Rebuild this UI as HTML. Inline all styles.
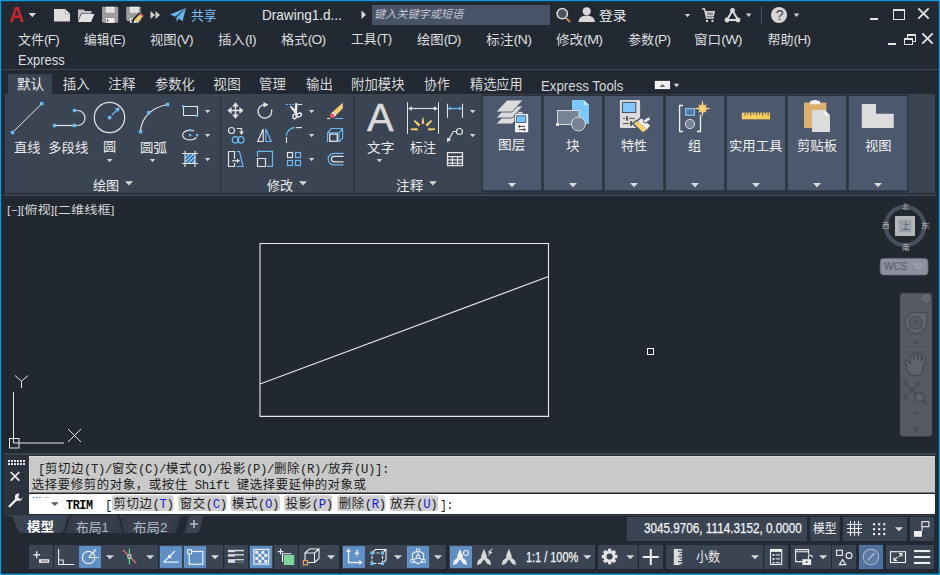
<!DOCTYPE html>
<html lang="zh-CN"><head><meta charset="utf-8"><title>AutoCAD</title>
<style>
html,body{margin:0;padding:0;background:#222933;}
body{width:940px;height:575px;position:relative;overflow:hidden;font-family:"Liberation Sans","Noto Sans CJK SC",sans-serif;}
svg{position:absolute;left:0;top:0;}
.t{position:absolute;white-space:nowrap;line-height:1.2;transform-origin:0 0;}
.m{font-family:"Liberation Mono","Noto Sans CJK SC",monospace;}
.l{font-size:13.5px;letter-spacing:-0.7px;}
.vb{font-size:10.5px;position:relative;top:-0.5px}
.c{font-family:"Noto Sans CJK SC",sans-serif;letter-spacing:0.6px;} .a{font-family:"Liberation Mono",monospace;font-size:12.3px;letter-spacing:-0.38px;}
</style></head>
<body>
<svg width="940" height="575" viewBox="0 0 940 575">
<rect x="0" y="0" width="940" height="575" fill="#222933" />
<rect x="4" y="196" width="935" height="257" fill="#212830" />
<path d="M28.549999999999997 13h7.5l-3.75 4.3z" fill="#dcdcdc"/>
<path d="M54 9h11l5 5v7.5h-16z" fill="#dcdcdc"  />
<path d="M65 9l5 5h-5z" fill="#f4f4f4"  />
<path d="M65.3 9.3v4.4h4.4" fill="none" stroke="#9a9a9a" stroke-width="0.8" />
<path d="M78 9.5h5.5l1.5 1.5h6.5v2.5h-10.5l-3 7.5z" fill="#c4c4c4"  />
<path d="M81.5 14h13l-3.5 8h-13z" fill="#e2e2e2"  />
<path d="M102 6.8h16.2v16h-14.7l-1.5 -1.5z" fill="#9c9c9c"  />
<rect x="105.8" y="6.8" width="8.7" height="5.8" fill="#f0f0f0" />
<rect x="106.6" y="7.6" width="7.1" height="4.2" fill="#e0e0e0" />
<rect x="105.8" y="18.2" width="8.7" height="4.6" fill="#f4f4f4" />
<rect x="106.9" y="19.3" width="1.3" height="2.5" fill="#555" />
<path d="M126.2 6.8h14.5v14.5h-13.0l-1.5 -1.5z" fill="#9c9c9c"  />
<rect x="130.0" y="6.8" width="8.7" height="5.8" fill="#f0f0f0" />
<rect x="130.8" y="7.6" width="7.1" height="4.2" fill="#e0e0e0" />
<rect x="130.0" y="18.2" width="8.7" height="4.6" fill="#f4f4f4" />
<rect x="131.1" y="19.3" width="1.3" height="2.5" fill="#555" />
<path d="M132 23.6l0.6 -4.6l6.6 -6.6l4 4l-6.6 6.6z" fill="#222933"  />
<path d="M134.6 19.4l5.2 -5.2l2.9 2.9l-5.2 5.2z" fill="#f4cc6a"  />
<path d="M139.8 14.2l1.2 -1.2l2.9 2.9l-1.2 1.2z" fill="#ee5560"  />
<path d="M134.6 19.4l2.9 2.9l-3.8 0.9z" fill="#f2f2f2"  />
<path d="M150.5 11l4.5 4l-4.5 4z" fill="#d0d0d0"  />
<path d="M155.5 11l4.5 4l-4.5 4z" fill="#d0d0d0"  />
<path d="M186 8l-16 6.5l5.5 2.2z" fill="#6ab6ee"  />
<path d="M186 8l-9.5 9.2l0 4.6l2.6 -3.2l3.4 2.6z" fill="#6ab6ee"  />
<path d="M186 8l-10.5 8.7l1 0.5z" fill="#222933"  />
<path d="M361.5 10.5l4.5 4.3l-4.5 4.3z" fill="#d8d8d8"  />
<rect x="372" y="5" width="178" height="20" fill="#495368" />
<circle cx="562.3" cy="13.6" r="5.2" fill="#4a5260" stroke="#dcdcdc" stroke-width="1.5" />
<line x1="565.5" y1="17.5" x2="570" y2="22" stroke="#c89060" stroke-width="1.8" />
<circle cx="586.7" cy="11.2" r="4" fill="#d8d8d8"  />
<path d="M578.4 22q0.3 -6.5 8.3 -6.5q8 0 8.3 6.5z" fill="#d8d8d8"  />
<path d="M684.75 14h5.5l-2.75 3.3z" fill="#d4d4d4"/>
<path d="M702 9h2.5l2 9h7.5" fill="none" stroke="#d8d8d8" stroke-width="1.3" />
<path d="M705 11h10l-1.2 5.5h-7.6z" fill="#d8d8d8"  />
<rect x="707" y="12.2" width="6" height="3" fill="#8a8e96" />
<rect x="706" y="20" width="2" height="2" fill="#d8d8d8" />
<rect x="711.5" y="20" width="2" height="2" fill="#d8d8d8" />
<path d="M732.5 10.5l-5.5 9.5h11z" fill="none" stroke="#dcdcdc" stroke-width="2" />
<circle cx="732.5" cy="10.5" r="2.4" fill="#dcdcdc"  />
<circle cx="727" cy="20" r="2.4" fill="#dcdcdc"  />
<circle cx="738" cy="20" r="2.4" fill="#dcdcdc"  />
<path d="M745.95 13.5h5.5l-2.75 3.5z" fill="#d0d0d0"/>
<rect x="761" y="6" width="1" height="18" fill="#46506a" />
<circle cx="779" cy="15" r="8" fill="#d6d6d6"  />
<path d="M793.75 13.5h5.5l-2.75 3.5z" fill="#d0d0d0"/>
<rect x="870" y="18" width="8" height="2" fill="#e4e4e4" />
<path d="M893 9h12v11h-12zM894 11v8h10v-8z" fill="#e4e4e4"  fill-rule="evenodd"/>
<path d="M918.3 8.3l10.4 10.4M928.7 8.3l-10.4 10.4" fill="none" stroke="#e4e4e4" stroke-width="1.8" />
<rect x="888" y="43" width="8" height="2" fill="#e4e4e4" />
<rect x="907" y="34" width="9" height="2" fill="#e4e4e4" />
<rect x="915" y="34" width="1" height="8" fill="#e4e4e4" />
<rect x="907" y="36" width="1" height="2" fill="#e4e4e4" />
<rect x="913" y="41" width="3" height="1" fill="#e4e4e4" />
<rect x="904" y="38" width="9" height="2" fill="#e4e4e4" />
<rect x="904" y="38" width="1" height="7" fill="#e4e4e4" />
<rect x="912" y="38" width="1" height="7" fill="#e4e4e4" />
<rect x="904" y="44" width="9" height="1" fill="#e4e4e4" />
<path d="M922.3 33.3l10.4 10.4M932.7 33.3l-10.4 10.4" fill="none" stroke="#e4e4e4" stroke-width="1.8" />
<rect x="1" y="69" width="938" height="1" fill="#39424f" />
<rect x="8" y="74" width="44" height="20" fill="#3b4453" />
<rect x="654.8" y="80.9" width="15.3" height="8.2" fill="#fafafa" />
<rect x="655.7" y="81.8" width="13.5" height="6.4" fill="#eeeeee" />
<path d="M659.8 87h5.4l-2.7 -3z" fill="#666"  />
<path d="M673.7 83.8h5.6l-2.8 3.4z" fill="#d8d8d8"/>
<rect x="5" y="94" width="930" height="99" fill="#3b4453" />
<rect x="4" y="194" width="932" height="2.2" fill="#39424f" />
<rect x="220" y="96" width="1" height="96" fill="#2a313c" />
<rect x="353.3" y="96" width="1" height="96" fill="#2a313c" />
<line x1="13.5" y1="131.5" x2="41" y2="104.5" stroke="#e4e4e4" stroke-width="1.0" />
<rect x="40" y="102" width="3.4" height="3.4" fill="#6cb8f0" />
<rect x="10.8" y="130.8" width="3.4" height="3.4" fill="#6cb8f0" />
<line x1="56" y1="125.5" x2="73" y2="125.5" stroke="#e4e4e4" stroke-width="1.2" />
<path d="M76.5 110.5h1a7.5 7.5 0 0 1 0 15h-1" fill="none" stroke="#e4e4e4" stroke-width="1.2" />
<rect x="52.8" y="123.8" width="3.4" height="3.4" fill="#6cb8f0" />
<rect x="72.8" y="123.8" width="3.4" height="3.4" fill="#6cb8f0" />
<rect x="72.8" y="108.8" width="3.4" height="3.4" fill="#6cb8f0" />
<circle cx="109.5" cy="117.5" r="15.2" fill="none" stroke="#e4e4e4" stroke-width="1.2" />
<rect x="107.9" y="115.9" width="3.4" height="3.4" fill="#6cb8f0" />
<line x1="112" y1="115" x2="118" y2="109" stroke="#6cb8f0" stroke-width="1.3" />
<path d="M119.8 107.2l-5 1.3l3.7 3.7z" fill="#6cb8f0"  />
<path d="M140.5 130.5Q143 110 167 104.5" fill="none" stroke="#e4e4e4" stroke-width="1.2" />
<rect x="165.9" y="102.8" width="3.4" height="3.4" fill="#6cb8f0" />
<rect x="147" y="111" width="3.4" height="3.4" fill="#6cb8f0" />
<rect x="138.9" y="129.9" width="3.4" height="3.4" fill="#6cb8f0" />
<path d="M106.85 159h5.5l-2.75 3.2z" fill="#d4d4d4"/>
<path d="M149.85 159h5.5l-2.75 3.2z" fill="#d4d4d4"/>
<path d="M183.5 106.5h14v9h-14z" fill="none" stroke="#e4e4e4" stroke-width="1.1" />
<rect x="182" y="105" width="2.2" height="2.2" fill="#6cb8f0" />
<rect x="196" y="114.6" width="2.2" height="2.2" fill="#6cb8f0" />
<path d="M204.85 110h5.5l-2.75 3.2z" fill="#d4d4d4"/>
<path d="M196.5 137.5A7.5 4.8 0 1 1 194 131" fill="none" stroke="#e4e4e4" stroke-width="1.2" />
<rect x="189" y="129" width="2.3" height="2.3" fill="#6cb8f0" />
<rect x="189" y="134" width="2.3" height="2.3" fill="#6cb8f0" />
<rect x="196" y="134" width="2.3" height="2.3" fill="#6cb8f0" />
<path d="M204.85 134h5.5l-2.75 3.2z" fill="#d4d4d4"/>
<rect x="185" y="153.5" width="10" height="10" fill="#33689c" />
<g stroke="#8fd0ff" stroke-width="1.1"><path d="M185.5 158l4.5 -4.5M185.5 162l8.5 -8.5M188 163.5l7 -7M192 163.5l3 -3"/></g>
<path d="M182 153.5h16M182 163.5h16M185 150.7v16.3M195 150.7v16.3" fill="none" stroke="#e4e4e4" stroke-width="1.1" />
<path d="M204.85 158h5.5l-2.75 3.2z" fill="#d4d4d4"/>
<path d="M125.0 181.3h8l-4.0 4.2z" fill="#d4d4d4"/>
<path d="M235.5 104v13M229 110.5h13" fill="none" stroke="#e4e4e4" stroke-width="1.5" />
<path d="M235.5 102.3l-3.4 4.2h6.8zM235.5 118.7l-3.4 -4.2h6.8zM227.4 110.5l4.2 -3.4v6.8zM243.6 110.5l-4.2 -3.4v6.8z" fill="#e4e4e4"  />
<path d="M271.5 109.5A6.8 6.8 0 1 1 264 104.6" fill="none" stroke="#e4e4e4" stroke-width="1.3" />
<path d="M263.5 102l5 2.8l-5 2.8z" fill="#e4e4e4"  />
<g stroke="#6cb8f0" stroke-width="1.1"><path d="M285.9 104.5h2.4M289.2 104.5h2.2M292.2 104.5h1.8"/></g>
<line x1="297.8" y1="104.5" x2="302.2" y2="104.5" stroke="#e4e4e4" stroke-width="1.1" />
<path d="M295.3 103l2.2 0.3l-0.5 9.4l-2.6 0z" fill="#f4f4f4"  />
<path d="M289.6 106.4l1.8 -0.5l5.6 5.8l-1.9 1.8z" fill="#f4f4f4"  />
<ellipse cx="294.6" cy="116.5" rx="1.7" ry="2.4" fill="none" stroke="#f4f4f4" stroke-width="1.3"/>
<ellipse cx="299.1" cy="115" rx="2.5" ry="1.7" fill="none" stroke="#f4f4f4" stroke-width="1.3" transform="rotate(-28 299.1 115)"/>
<path d="M295.6 112.5l2 1.5" fill="none" stroke="#f4f4f4" stroke-width="1.4" />
<path d="M308.85 110h5.5l-2.75 3.2z" fill="#d4d4d4"/>
<path d="M342.8 102.8v5.7l-6.3 6.2l-3.2 -3.4z" fill="#f6cd6e"  />
<path d="M333.3 111.3l3.2 3.4l-2.2 2.2l-3.2 -3.4z" fill="#f6f6f6"  />
<circle cx="332.2" cy="115.8" r="2.4" fill="#ee5560"  />
<line x1="327" y1="118.5" x2="330" y2="118.5" stroke="#e4e4e4" stroke-width="1.1" />
<line x1="335" y1="118.5" x2="343.2" y2="118.5" stroke="#6cb8f0" stroke-width="1.1" />
<circle cx="231.5" cy="130.5" r="3" fill="none" stroke="#e4e4e4" stroke-width="1.2" />
<path d="M236.5 128.5h5v4" fill="none" stroke="#e4e4e4" stroke-width="1.2" />
<path d="M241.5 135l-2.4 -3.4h4.8z" fill="#e4e4e4"  />
<circle cx="235.5" cy="139.8" r="3.2" fill="none" stroke="#6cb8f0" stroke-width="1.3" />
<circle cx="240.8" cy="139.8" r="3.2" fill="none" stroke="#6cb8f0" stroke-width="1.3" />
<path d="M263.2 129v12.5h-5.4z" fill="none" stroke="#e4e4e4" stroke-width="1.2" />
<path d="M265.8 129v12.5h5.4z" fill="none" stroke="#6cb8f0" stroke-width="1.2" />
<path d="M286.4 135.6A8.5 8.5 0 0 1 294.9 127.6" fill="none" stroke="#6cb8f0" stroke-width="1.3" />
<line x1="296.1" y1="127.6" x2="302" y2="127.6" stroke="#e4e4e4" stroke-width="1.2" />
<line x1="286.5" y1="137" x2="286.5" y2="143" stroke="#e4e4e4" stroke-width="1.1" />
<path d="M308.85 134h5.5l-2.75 3.2z" fill="#d4d4d4"/>
<rect x="329.7" y="134.1" width="7.6" height="7.2" fill="none" stroke="#e4e4e4" stroke-width="1.3"/>
<path d="M327.5 141.9V132.8L331.3 128.5H342.6L338.9 132.8H327.5M342.6 128.5V138L338.9 141.9V132.8" fill="none" stroke="#6cb8f0" stroke-width="1.15" stroke-linejoin="round"/>
<path d="M228.5 151.5h6v7.5M228.5 151.5v15h6v-3.5" fill="none" stroke="#e4e4e4" stroke-width="1.2" />
<path d="M236.5 151.5h3l3.5 15h-6.5" fill="none" stroke="#6cb8f0" stroke-width="1.2" />
<line x1="232" y1="160.8" x2="238" y2="160.8" stroke="#e4e4e4" stroke-width="1.2" />
<path d="M240 160.8l-3 -2.2v4.4z" fill="#e4e4e4"  />
<path d="M257.5 151.3h15v15h-5.5M257.5 151.3v5.5" fill="none" stroke="#6cb8f0" stroke-width="1.2" />
<path d="M257.5 158.5h8v8h-8z" fill="none" stroke="#e4e4e4" stroke-width="1.2" />
<rect x="287.5" y="152.5" width="5" height="5" fill="none" stroke="#e4e4e4" stroke-width="1.2"/>
<rect x="295.5" y="152.5" width="5" height="5" fill="none" stroke="#6cb8f0" stroke-width="1.2"/>
<rect x="287.5" y="160.5" width="5" height="5" fill="none" stroke="#6cb8f0" stroke-width="1.2"/>
<rect x="295.5" y="160.5" width="5" height="5" fill="none" stroke="#6cb8f0" stroke-width="1.2"/>
<path d="M308.85 158h5.5l-2.75 3.2z" fill="#d4d4d4"/>
<path d="M343.5 153.3h-9.5a5.8 5.8 0 0 0 0 11.6h9.5" fill="none" stroke="#6cb8f0" stroke-width="1.2" />
<path d="M343.5 156.3h-9.3a2.8 2.8 0 0 0 0 5.6h9.3" fill="none" stroke="#e4e4e4" stroke-width="1.2" />
<path d="M299.0 181.3h8l-4.0 4.2z" fill="#d4d4d4"/>
<path d="M376.65 159h5.5l-2.75 3.2z" fill="#d4d4d4"/>
<line x1="407.5" y1="102.2" x2="407.5" y2="134" stroke="#e4e4e4" stroke-width="1" />
<line x1="438.5" y1="102.2" x2="438.5" y2="134" stroke="#e4e4e4" stroke-width="1" />
<line x1="410" y1="108.5" x2="436" y2="108.5" stroke="#e4e4e4" stroke-width="1.1" />
<path d="M408 108.5l4 -2.2v4.4zM438 108.5l-4 -2.2v4.4z" fill="#e4e4e4"  />
<g fill="#fbd36c"><path d="M422.4 117.4h1l0.8 6.4h-2.6z"/><path d="M413.6 121l1.2 -1l5.4 4.6l-1.6 1.8z"/><path d="M432.2 121l-1.2 -1l-5.4 4.6l1.6 1.8z"/><path d="M410.8 128.6l6.8 -0.4v2.4l-6.8 -0.6z"/><path d="M435 128.6l-6.8 -0.4v2.4l6.8 -0.6z"/></g>
<line x1="447.5" y1="103.7" x2="447.5" y2="117.8" stroke="#e4e4e4" stroke-width="1.1" />
<line x1="462.5" y1="103.7" x2="462.5" y2="117.8" stroke="#e4e4e4" stroke-width="1.1" />
<line x1="448" y1="108.5" x2="462" y2="108.5" stroke="#6cb8f0" stroke-width="1.3" />
<path d="M448 108.5l3 -1.8v3.6zM462 108.5l-3 -1.8v3.6z" fill="#6cb8f0"  />
<path d="M469.85 110h5.5l-2.75 3.2z" fill="#d4d4d4"/>
<circle cx="459.5" cy="131.5" r="3" fill="none" stroke="#e4e4e4" stroke-width="1.2" />
<path d="M456.3 131.5h-3l-4.6 8" fill="none" stroke="#e4e4e4" stroke-width="1.2" />
<path d="M446.8 142.4l0.6 -5l3.8 2.2z" fill="#e4e4e4"  />
<path d="M469.85 134h5.5l-2.75 3.2z" fill="#d4d4d4"/>
<path d="M447.5 152.7h15v13h-15z" fill="none" stroke="#e4e4e4" stroke-width="1.3" />
<path d="M447.5 156.6h15M447.5 159.9h15M447.5 163.1h15M452.4 156.6v9M457.6 156.6v9" fill="none" stroke="#e4e4e4" stroke-width="1.1" />
<path d="M428.9 181.3h8l-4.0 4.2z" fill="#d4d4d4"/>
<rect x="481.5" y="94.8" width="61.0" height="97.6" fill="#28303b" />
<rect x="482.7" y="96" width="58.6" height="94.3" fill="#4c586d" />
<path d="M508.0 183h8l-4.0 4.2z" fill="#dcdcdc"/>
<rect x="542.5" y="94.8" width="61.0" height="97.6" fill="#28303b" />
<rect x="543.7" y="96" width="58.6" height="94.3" fill="#4c586d" />
<path d="M569.0 183h8l-4.0 4.2z" fill="#dcdcdc"/>
<rect x="603.5" y="94.8" width="61.0" height="97.6" fill="#28303b" />
<rect x="604.7" y="96" width="58.6" height="94.3" fill="#4c586d" />
<path d="M630.0 183h8l-4.0 4.2z" fill="#dcdcdc"/>
<rect x="664.5" y="94.8" width="61.0" height="97.6" fill="#28303b" />
<rect x="665.7" y="96" width="58.6" height="94.3" fill="#4c586d" />
<path d="M691.0 183h8l-4.0 4.2z" fill="#dcdcdc"/>
<rect x="725.5" y="94.8" width="61.0" height="97.6" fill="#28303b" />
<rect x="726.7" y="96" width="58.6" height="94.3" fill="#4c586d" />
<path d="M752.0 183h8l-4.0 4.2z" fill="#dcdcdc"/>
<rect x="786.5" y="94.8" width="61.0" height="97.6" fill="#28303b" />
<rect x="787.7" y="96" width="58.6" height="94.3" fill="#4c586d" />
<path d="M813.0 183h8l-4.0 4.2z" fill="#dcdcdc"/>
<rect x="847.5" y="94.8" width="61.0" height="97.6" fill="#28303b" />
<rect x="848.7" y="96" width="58.6" height="94.3" fill="#4c586d" />
<path d="M874.0 183h8l-4.0 4.2z" fill="#dcdcdc"/>
<path d="M507.1 112h16l-11 12h-16.2z" fill="#dcdcdc" stroke="#4c586d" stroke-width="0.9" />
<path d="M507.1 106h16l-11 12h-16.2z" fill="#dcdcdc" stroke="#4c586d" stroke-width="0.9" />
<path d="M507.1 100h16l-11 12h-16.2z" fill="#dcdcdc" stroke="#4c586d" stroke-width="0.9" />
<rect x="514.3" y="113.4" width="14.5" height="19.4" fill="#4c586d" rx="1.5"/>
<rect x="518.9" y="111.9" width="3.8" height="1.6" fill="#dcdcdc" />
<rect x="515" y="114" width="13.2" height="18.2" fill="#f4f4f4" rx="1"/>
<rect x="516.6" y="115.8" width="9.2" height="6.6" fill="#70c2fa" stroke="#3c4c64" stroke-width="0.8"/>
<path d="M518.8 126.4h6.2M525.2 129.6h-6.2" fill="none" stroke="#444" stroke-width="1" />
<path d="M517.8 126.4l2.2 -1.6v3.2zM526 129.6l-2.2 -1.6v3.2z" fill="#444"  />
<path d="M572 100h12l5 5v18.8h-17z" fill="#7cc8fa"  />
<path d="M584 100l5 5h-5z" fill="#c4e6fc"  />
<rect x="557.5" y="110.5" width="21.5" height="14" fill="#788496" stroke="#d8d8d8" stroke-width="1"/>
<rect x="556" y="123" width="3" height="3" fill="#e0e0e0" />
<circle cx="578.4" cy="124" r="7" fill="#788496" stroke="#d8d8d8" stroke-width="1" />
<rect x="619.9" y="100" width="20.2" height="28" fill="#dcdcdc" rx="0.8"/>
<rect x="622.4" y="102.4" width="13.4" height="10.2" fill="#84c8fa" stroke="#3a4556" stroke-width="0.9"/>
<path d="M623 118.4h2M629.3 118.4h5.6M623 123.5h5.9" fill="none" stroke="#555" stroke-width="1" />
<rect x="626.2" y="116.2" width="1.7" height="4.5" fill="#444" />
<rect x="630.2" y="121.2" width="1.7" height="4.6" fill="#444" />
<path d="M632.6 123.5l5.2 -3.4l4.2 -3l9.2 8.3l-3.6 4.4l-4.6 3.4z" fill="#4c586d" stroke="#4c586d" stroke-width="1.6" stroke-linejoin="round"/>
<path d="M633.6 123.3l4.4 -2.2l8.9 8.3l-4 2.8z" fill="#fbd070"  />
<path d="M638 121.1l3.5 -2.7l8.7 7.2l-3.3 3.8z" fill="#f4f4f4"  />
<path d="M645.2 121.2l3.2 -2.2" fill="none" stroke="#4c586d" stroke-width="4.4" stroke-linecap="round"/>
<path d="M645.2 121.2l3.4 -2.3" fill="none" stroke="#f4f4f4" stroke-width="2.6" stroke-linecap="round"/>
<path d="M683 105.5h-3.4v26h3.4M697 131.5h3.5v-16.7" fill="none" stroke="#f4f4f4" stroke-width="1.3" />
<rect x="685.6" y="108.6" width="8.8" height="6.6" fill="#55789e" stroke="#7cc8fa" stroke-width="1.2"/>
<circle cx="690" cy="124" r="4.6" fill="#788494" stroke="#e0e0e0" stroke-width="1" />
<polygon points="702.5 100.1 703.7 105.6 706.7 104.3 705.4 107.3 710.9 108.5 705.4 109.7 706.7 112.7 703.7 111.4 702.5 116.9 701.3 111.4 698.3 112.7 699.6 109.7 694.1 108.5 699.6 107.3 698.3 104.3 701.3 105.6" fill="#fcd374"/>
<rect x="741.8" y="112.6" width="28.2" height="6.7" fill="#f6cf5e" />
<rect x="744.5" y="112.6" width="0.9" height="3.2" fill="#4c586d" />
<rect x="747.4" y="112.6" width="0.9" height="2.2" fill="#4c586d" />
<rect x="750.3" y="112.6" width="0.9" height="3.2" fill="#4c586d" />
<rect x="753.2" y="112.6" width="0.9" height="2.2" fill="#4c586d" />
<rect x="756.1" y="112.6" width="0.9" height="3.2" fill="#4c586d" />
<rect x="759.0" y="112.6" width="0.9" height="2.2" fill="#4c586d" />
<rect x="761.9" y="112.6" width="0.9" height="3.2" fill="#4c586d" />
<rect x="764.8" y="112.6" width="0.9" height="2.2" fill="#4c586d" />
<rect x="767.7" y="112.6" width="0.9" height="3.2" fill="#4c586d" />
<rect x="804" y="102.6" width="22.4" height="25.4" fill="#dcb070" rx="1"/>
<rect x="810" y="100.8" width="10" height="3.5" fill="#f4f4f4" rx="1"/>
<rect x="813" y="100" width="4" height="2" fill="#f4f4f4" />
<path d="M812 110h12.5l5.5 5.5v16.5h-18z" fill="#dcdcdc"  />
<path d="M824.5 110l5.5 5.5h-5.5z" fill="#f8f8f8"  />
<path d="M861.8 104h14.2v9.7h17.8v14.3h-32z" fill="#dcdcdc"  />
<g fill="none" stroke="#e8e8e8" stroke-width="1.1"><path d="M260 243.5H548.5V416.4H260z"/><path d="M260 384L548.5 276.5"/></g>
<path d="M13.5 392v51h50.5" fill="none" stroke="#e6e6e6" stroke-width="1" />
<rect x="9.5" y="438.5" width="9.5" height="9.5" fill="none" stroke="#e6e6e6" stroke-width="1"/>
<path d="M15 375.5l6.5 5.8l6.5 -5.8M21.5 381.3v6.7" fill="none" stroke="#e6e6e6" stroke-width="1" />
<path d="M68 429l13 13M81 429l-13 13" fill="none" stroke="#e6e6e6" stroke-width="1" />
<rect x="647.5" y="348.5" width="6" height="6" fill="none" stroke="#f4f4f4" stroke-width="1"/>
<circle cx="905" cy="226" r="19.2" fill="none" stroke="#474f5c" stroke-width="4.2" />
<rect x="895" y="216" width="20" height="20" fill="#b4b6ba" />
<rect x="898.5" y="219.5" width="13" height="13" fill="#9aa0aa" />
<rect x="880.2" y="258.4" width="47.8" height="16.5" fill="#8c90a0" rx="3.5" stroke="#6a6e7c" stroke-width="0.8"/>
<path d="M914.5 264h8.5l-4.25 5.2z" fill="none" stroke="#a9adba" stroke-width="1" />
<rect x="900" y="293" width="32" height="143.5" fill="#565b63" rx="3" stroke="#3a3f47" stroke-width="0.8"/>
<circle cx="926" cy="298.2" r="3.4" fill="#6a7078"  />
<path d="M924.3 296.5l3.4 3.4M927.7 296.5l-3.4 3.4" fill="none" stroke="#4a4f57" stroke-width="0.9" />
<path d="M905 323a11 10.8 0 0 0 22 0v-10.5h-11a11 10.5 0 0 0 -11 10.5z" fill="#5e646c" stroke="#43484f" stroke-width="1" />
<circle cx="915.8" cy="322.6" r="6.3" fill="#5a6068" stroke="#43484f" stroke-width="1" />
<circle cx="915.8" cy="322.6" r="3.6" fill="#50555d"  />
<path d="M911 327l-3.5 4M920.6 327l3.5 4" fill="none" stroke="#43484f" stroke-width="1" />
<path d="M913.65 341.8h5.5l-2.75 3z" fill="#43484f"/>
<line x1="903" y1="349.5" x2="929" y2="349.5" stroke="#5f646c" stroke-width="1" />
<g transform="translate(915.6 366) scale(1.22 1.2) translate(-914.2 -366.3)">
<path d="M907 366q-3 -3 -1.5 -4.2q1.8 -1 4.5 2.5v-7q1 -2.2 2.3 0l0.4 4.5l0.3 -6q1.2 -2.2 2.5 0l0.2 6l0.8 -5.2q1.3 -2 2.4 0.2l-0.2 6l1.6 -3.6q1.6 -1.4 2.2 0.6q-1.2 4.5 -2 8q-1 5.5 -5 6.6q-5.5 0.9 -8.5 -4.4z" fill="#5e646c" stroke="#43484f" stroke-width="0.85" />
</g>
<path d="M905 383l13 13M919 383l-14 14" fill="none" stroke="#43484f" stroke-width="1.2" />
<path d="M904 382v4.5M904 382h4.5M920 382h-4.5M920 382v4.5M904 398v-4.5M904 398h4.5" fill="none" stroke="#43484f" stroke-width="1.2" />
<circle cx="919.6" cy="397.2" r="4.4" fill="#5e646c" stroke="#43484f" stroke-width="1.2" />
<line x1="923" y1="400.5" x2="927" y2="404.5" stroke="#43484f" stroke-width="2.2" />
<path d="M913.85 412h5.5l-2.75 3z" fill="#43484f"/>
<path d="M913.5 426l2.6 2.4l2.6 -2.4M913.5 429l2.6 2.4l2.6 -2.4" fill="none" stroke="#43484f" stroke-width="1.1" />
<rect x="4" y="453" width="932" height="2.3" fill="#39424f" />
<rect x="4" y="455.2" width="25" height="60" fill="#2b323e" />
<rect x="29" y="456" width="906" height="36.5" fill="#c9c9c9" />
<rect x="29" y="456" width="906" height="0.8" fill="#dedede" />
<rect x="29" y="456" width="0.8" height="36.5" fill="#dedede" />
<rect x="29" y="494" width="906" height="20" fill="#ffffff" rx="1"/>
<rect x="8" y="460" width="2" height="1.9" fill="#f0f0f0" />
<rect x="11" y="460" width="2" height="1.9" fill="#f0f0f0" />
<rect x="14" y="460" width="2" height="1.9" fill="#f0f0f0" />
<rect x="17" y="460" width="2" height="1.9" fill="#f0f0f0" />
<rect x="20" y="460" width="2" height="1.9" fill="#f0f0f0" />
<rect x="23" y="460" width="2" height="1.9" fill="#f0f0f0" />
<rect x="8" y="463.1" width="2" height="1.9" fill="#f0f0f0" />
<rect x="11" y="463.1" width="2" height="1.9" fill="#f0f0f0" />
<rect x="14" y="463.1" width="2" height="1.9" fill="#f0f0f0" />
<rect x="17" y="463.1" width="2" height="1.9" fill="#f0f0f0" />
<rect x="20" y="463.1" width="2" height="1.9" fill="#f0f0f0" />
<rect x="23" y="463.1" width="2" height="1.9" fill="#f0f0f0" />
<path d="M10.7 472l8.6 8.6M19.3 472l-8.6 8.6" fill="none" stroke="#f0f0f0" stroke-width="1.7" />
<path d="M9.6 506.2l7.6 -7.6" fill="none" stroke="#f0f0f0" stroke-width="2.3" stroke-linecap="round"/>
<circle cx="18.6" cy="497.2" r="3.7" fill="#f0f0f0"  />
<path d="M18.2 497.6l1.6 -5.4l4.6 3.4l-4 3.6z" fill="#2b323e"  />
<g stroke="#55a8f0" stroke-width="1"><path d="M33 497.5h2M36 497.5h2M39 497.5h2"/></g>
<line x1="45" y1="497.5" x2="49" y2="497.5" stroke="#c0c0c0" stroke-width="1" />
<path d="M50.8 502.2h8l-4.0 3.8z" fill="#5a5a5a"/>
<rect x="112" y="495.2" width="61.6" height="15.8" fill="#cfcfcf" rx="2.5"/>
<rect x="178.3" y="495.2" width="48.4" height="15.8" fill="#cfcfcf" rx="2.5"/>
<rect x="230.6" y="495.2" width="49.3" height="15.8" fill="#cfcfcf" rx="2.5"/>
<rect x="284.2" y="495.2" width="48" height="15.8" fill="#cfcfcf" rx="2.5"/>
<rect x="337.3" y="495.2" width="48" height="15.8" fill="#cfcfcf" rx="2.5"/>
<rect x="389.7" y="495.2" width="48.5" height="15.8" fill="#cfcfcf" rx="2.5"/>
<rect x="4" y="514.9" width="931" height="1.2" fill="#363e4b" />
<path d="M62 516H183C178.5 516 178.5 533 174 533H58z" fill="#333b48"  />
<rect x="71.5" y="516" width="43.2" height="17" fill="#373f4c" />
<rect x="128.4" y="516" width="43.2" height="17" fill="#373f4c" />
<path d="M118.2 515.6C121.6 516 121 533 124.6 533.4" fill="none" stroke="#222933" stroke-width="1.7" />
<path d="M182.6 533C187.4 533 186 516 191 516H205.4C200.4 516 201.6 533 197 533z" fill="#3a4350"  />
<path d="M71.6 515.6C66 516 66.5 533 60.6 533.4" fill="none" stroke="#222933" stroke-width="2.2" />
<path d="M9 516c4.5 0 5 4 6.5 8s2 9 7.5 9h36.5c5 0 5 -5 6 -9s1.5 -8 5.5 -8z" fill="#3b4453"  />
<path d="M190 524h8M194 520v8" fill="none" stroke="#b4bcc8" stroke-width="1.6" />
<rect x="627" y="517" width="180" height="24" fill="#3b4453" />
<rect x="810.2" y="517" width="29.399999999999977" height="24" fill="#3b4453" />
<rect x="843" y="517" width="64" height="24" fill="#3b4453" />
<g stroke="#eeeeee" stroke-width="1.1"><path d="M850.5 521v14.7M854.5 521v14.7M858.5 521v14.7M847 524.5h15M847 528.5h15M847 532.5h15"/></g>
<rect x="873.0" y="523.2" width="2.1" height="2.1" fill="#eeeeee" />
<rect x="878.1" y="523.2" width="2.1" height="2.1" fill="#eeeeee" />
<rect x="883.2" y="523.2" width="2.1" height="2.1" fill="#eeeeee" />
<rect x="873.0" y="528.1" width="2.1" height="2.1" fill="#eeeeee" />
<rect x="878.1" y="528.1" width="2.1" height="2.1" fill="#eeeeee" />
<rect x="883.2" y="528.1" width="2.1" height="2.1" fill="#eeeeee" />
<rect x="873.0" y="533.0" width="2.1" height="2.1" fill="#eeeeee" />
<rect x="878.1" y="533.0" width="2.1" height="2.1" fill="#eeeeee" />
<rect x="883.2" y="533.0" width="2.1" height="2.1" fill="#eeeeee" />
<path d="M894.9 527.2h8.2l-4.1 4z" fill="#d6d6d6"/>
<rect x="910" y="517" width="24" height="24" fill="#3b4453" />
<rect x="921.9" y="521.7" width="7" height="5" fill="none" stroke="#eeeeee" stroke-width="1.1"/>
<rect x="914" y="531" width="8" height="5.8" fill="#eeeeee" />
<line x1="922" y1="527" x2="922" y2="531" stroke="#eeeeee" stroke-width="1.1" />
<rect x="29" y="545" width="24" height="24" fill="#3b4453" />
<path d="M36.7 551.3v7M33.2 554.8h7" fill="none" stroke="#eeeeee" stroke-width="1.3" />
<rect x="39" y="559.2" width="10.2" height="3.6" fill="#eeeeee" />
<rect x="41" y="560.3" width="7" height="1.4" fill="#888" />
<rect x="54" y="545" width="104" height="24" fill="#3b4453" />
<path d="M58.6 549v15.5h15.5M58.6 560h4.6v4.5" fill="none" stroke="#eeeeee" stroke-width="1.1" />
<rect x="79.2" y="546.2" width="21.799999999999997" height="21.59999999999991" fill="#6698cf" />
<rect x="80.10000000000001" y="547.1" width="20.599999999999998" height="20.39999999999991" fill="#5f8fc3" />
<circle cx="88.6" cy="557.5" r="6.2" fill="none" stroke="#eeeeee" stroke-width="1.2" />
<path d="M88.6 557.5h10M88.6 557.5l7.4 -8" fill="none" stroke="#eeeeee" stroke-width="1.2" />
<path d="M105.80000000000001 555.2h8.2l-4.1 4z" fill="#d6d6d6"/>
<line x1="129.4" y1="548.8" x2="129.4" y2="564" stroke="#58d878" stroke-width="1.2" />
<line x1="123" y1="550" x2="136" y2="563" stroke="#f06868" stroke-width="1.2" />
<rect x="127.9" y="555" width="3" height="3" fill="#3b4453" stroke="#f4f4f4" stroke-width="0.9"/>
<path d="M146.1 555.2h8.2l-4.1 4z" fill="#d6d6d6"/>
<rect x="159" y="545" width="64" height="24" fill="#3b4453" />
<rect x="160" y="546.2" width="22" height="21.59999999999991" fill="#6698cf" />
<rect x="160.9" y="547.1" width="20.8" height="20.39999999999991" fill="#5f8fc3" />
<rect x="184" y="546.2" width="22" height="21.59999999999991" fill="#6698cf" />
<rect x="184.9" y="547.1" width="20.8" height="20.39999999999991" fill="#5f8fc3" />
<path d="M163.5 562.2h15.5M163.5 562.2l11.5 -11.2" fill="none" stroke="#eeeeee" stroke-width="1.3" />
<rect x="168" y="555" width="3.2" height="3.2" fill="#eeeeee" />
<rect x="189.2" y="551.5" width="13.6" height="12.8" fill="none" stroke="#eeeeee" stroke-width="1.2"/>
<rect x="187.5" y="549.8" width="4" height="4" fill="#5f8fc3" stroke="#eeeeee" stroke-width="1.1"/>
<path d="M210.9 555.2h8.2l-4.1 4z" fill="#d6d6d6"/>
<rect x="224.3" y="545" width="23.69999999999999" height="24" fill="#3b4453" />
<rect x="228" y="549.8" width="7" height="2.4" fill="#dcdcdc" />
<rect x="235" y="549.8" width="9" height="1.1" fill="#eeeeee" />
<rect x="235" y="551.3" width="9" height="0.5" fill="#aaa" />
<rect x="228" y="554.2" width="7" height="2.4" fill="#dcdcdc" />
<rect x="235" y="554.2" width="9" height="1.1" fill="#eeeeee" />
<rect x="235" y="555.7" width="9" height="0.5" fill="#aaa" />
<rect x="228" y="559.2" width="7" height="3.6" fill="#dcdcdc" />
<rect x="235" y="559.2" width="9" height="1.1" fill="#eeeeee" />
<rect x="235" y="561.9000000000001" width="9" height="0.5" fill="#aaa" />
<rect x="249.1" y="545" width="23.900000000000006" height="24" fill="#3b4453" />
<rect x="250" y="546.2" width="22.100000000000023" height="21.59999999999991" fill="#6698cf" />
<rect x="250.9" y="547.1" width="20.900000000000023" height="20.39999999999991" fill="#5f8fc3" />
<rect x="253.9" y="549.5" width="14.8" height="14.6" fill="none" stroke="#eeeeee" stroke-width="1.2"/>
<rect x="255.3" y="550.9" width="3" height="3" fill="#eeeeee" />
<rect x="261.3" y="550.9" width="3" height="3" fill="#eeeeee" />
<rect x="258.3" y="553.9" width="3" height="3" fill="#eeeeee" />
<rect x="264.3" y="553.9" width="3" height="3" fill="#eeeeee" />
<rect x="255.3" y="556.9" width="3" height="3" fill="#eeeeee" />
<rect x="261.3" y="556.9" width="3" height="3" fill="#eeeeee" />
<rect x="258.3" y="559.9" width="3" height="3" fill="#eeeeee" />
<rect x="264.3" y="559.9" width="3" height="3" fill="#eeeeee" />
<rect x="274" y="545" width="24" height="24" fill="#3b4453" />
<path d="M280.6 548.8v5.6M277.8 551.6h5.6" fill="none" stroke="#eeeeee" stroke-width="1.1" />
<path d="M282.5 562v-8.3h9" fill="none" stroke="#eeeeee" stroke-width="1.1" />
<rect x="283.8" y="555" width="10.4" height="10" fill="#7dd69c" />
<rect x="299" y="545" width="40.19999999999999" height="24" fill="#3b4453" />
<path d="M305 553h9.5v9.5h-9.5zM305 553l4.5 -4h9.5l-4.5 4M319 549v9.5l-4.5 4" fill="none" stroke="#eeeeee" stroke-width="1.1" />
<rect x="303.3" y="560.6" width="4.2" height="4.2" fill="#3b4453" stroke="#f0a868" stroke-width="1.1"/>
<path d="M327.0 555.2h8.2l-4.1 4z" fill="#d6d6d6"/>
<rect x="342" y="545" width="103.80000000000001" height="24" fill="#3b4453" />
<rect x="343" y="546.2" width="22" height="21.59999999999991" fill="#6698cf" />
<rect x="343.9" y="547.1" width="20.8" height="20.39999999999991" fill="#5f8fc3" />
<path d="M348.5 550v12.5h12.5" fill="none" stroke="#eeeeee" stroke-width="1.3" />
<path d="M348.5 548.3l-2.4 3.6h4.8zM362.8 562.5l-3.6 -2.4v4.8z" fill="#eeeeee"  />
<path d="M357.5 549.5l-3 4.5h2.5l-1.5 4l4 -5.5h-2.5l1.5 -3z" fill="#eeeeee"  />
<g fill="none" stroke="#eeeeee" stroke-width="1.1" stroke-dasharray="3 1.5"><path d="M372 553h10.5v10.5h-10.5z"/></g>
<path d="M372 553l3.5 -3.5h10.5l-3.5 3.5M386 549.5v10.5l-3.5 3.5" fill="none" stroke="#eeeeee" stroke-width="1.1" />
<rect x="370.4" y="551.4" width="3.2" height="3.2" fill="#6cc0f8" />
<rect x="380.9" y="551.4" width="3.2" height="3.2" fill="#6cc0f8" />
<rect x="370.4" y="561.9" width="3.2" height="3.2" fill="#6cc0f8" />
<rect x="380.9" y="561.9" width="3.2" height="3.2" fill="#6cc0f8" />
<path d="M393.79999999999995 555.2h8.2l-4.1 4z" fill="#d6d6d6"/>
<rect x="407" y="546.2" width="22" height="21.59999999999991" fill="#6698cf" />
<rect x="407.9" y="547.1" width="20.8" height="20.39999999999991" fill="#5f8fc3" />
<path d="M418 551v6M418 557l-5.6 3.6M418 557l5.6 3.6M412.4 553.6l5.6 -3l5.6 3v7l-5.6 3.2l-5.6 -3.2z" fill="none" stroke="#eeeeee" stroke-width="1.1" />
<rect x="416.6" y="548.9" width="2.8" height="2.8" fill="#5f8fc3" stroke="#eeeeee" stroke-width="0.9"/>
<rect x="416.6" y="555.6" width="2.8" height="2.8" fill="#5f8fc3" stroke="#eeeeee" stroke-width="0.9"/>
<rect x="410.90000000000003" y="559.6" width="2.8" height="2.8" fill="#5f8fc3" stroke="#eeeeee" stroke-width="0.9"/>
<rect x="422.3" y="559.6" width="2.8" height="2.8" fill="#5f8fc3" stroke="#eeeeee" stroke-width="0.9"/>
<path d="M433.9 555.2h8.2l-4.1 4z" fill="#d6d6d6"/>
<rect x="449" y="545" width="146" height="24" fill="#3b4453" />
<rect x="450" y="546.2" width="22" height="21.59999999999991" fill="#6698cf" />
<rect x="450.9" y="547.1" width="20.8" height="20.39999999999991" fill="#5f8fc3" />
<polygon points="460.0,548.8 461.7,553 463.0,556.3 462.4,557.6 466.0,560.6 467.3,565 463.5,564 460.9,560.6 460.0,559.2 459.1,560.6 456.5,564 452.7,565 454.0,560.6 457.6,557.6 457.0,556.3 458.3,553" fill="#eeeeee"/>
<circle cx="466" cy="553" r="2.5" fill="none" stroke="#eeeeee" stroke-width="1.1" />
<polygon points="484.0,548.8 485.7,553 487.0,556.3 486.4,557.6 490.0,560.6 491.3,565 487.5,564 484.9,560.6 484.0,559.2 483.1,560.6 480.5,564 476.7,565 478.0,560.6 481.6,557.6 481.0,556.3 482.3,553" fill="#d8d8d8"/>
<path d="M492 548.6l-4.4 3.6l2.2 0.8l-2.6 3.8l5.4 -4.6l-2.4 -0.8l2.4 -2.4z" fill="#d8d8d8"  />
<polygon points="508.9,548.8 510.6,553 511.9,556.3 511.3,557.6 514.9,560.6 516.2,565 512.4,564 509.8,560.6 508.9,559.2 508.0,560.6 505.4,564 501.6,565 502.9,560.6 506.5,557.6 505.9,556.3 507.2,553" fill="#d8d8d8"/>
<path d="M583.1999999999999 555.2h8.2l-4.1 4z" fill="#d6d6d6"/>
<rect x="598" y="545" width="39.799999999999955" height="24" fill="#3b4453" />
<g transform="translate(609.6 556.5)"><g fill="#e4e4e4"><rect x="-1.7" y="-7.8" width="3.4" height="4" transform="rotate(0)"/><rect x="-1.7" y="-7.8" width="3.4" height="4" transform="rotate(45)"/><rect x="-1.7" y="-7.8" width="3.4" height="4" transform="rotate(90)"/><rect x="-1.7" y="-7.8" width="3.4" height="4" transform="rotate(135)"/><rect x="-1.7" y="-7.8" width="3.4" height="4" transform="rotate(180)"/><rect x="-1.7" y="-7.8" width="3.4" height="4" transform="rotate(225)"/><rect x="-1.7" y="-7.8" width="3.4" height="4" transform="rotate(270)"/><rect x="-1.7" y="-7.8" width="3.4" height="4" transform="rotate(315)"/></g><circle r="4.6" fill="none" stroke="#e4e4e4" stroke-width="3"/></g>
<path d="M626.1999999999999 555.2h8.2l-4.1 4z" fill="#d6d6d6"/>
<rect x="639" y="545" width="24" height="24" fill="#3b4453" />
<path d="M650.8 549v16M642.8 557h16" fill="none" stroke="#eeeeee" stroke-width="2" />
<rect x="666.2" y="545" width="96.79999999999995" height="24" fill="#3b4453" />
<rect x="673.8" y="549" width="8.3" height="16" fill="#dcdcdc" />
<rect x="678" y="550.6" width="4.6" height="1.1" fill="#3b4453" />
<rect x="679.6" y="553.2" width="4.6" height="1.1" fill="#3b4453" />
<rect x="678" y="555.8000000000001" width="4.6" height="1.1" fill="#3b4453" />
<rect x="679.6" y="558.4" width="4.6" height="1.1" fill="#3b4453" />
<rect x="678" y="561.0" width="4.6" height="1.1" fill="#3b4453" />
<rect x="679.6" y="563.6" width="4.6" height="1.1" fill="#3b4453" />
<path d="M750.9 555.2h8.2l-4.1 4z" fill="#d6d6d6"/>
<rect x="764.3" y="545" width="23.700000000000045" height="24" fill="#3b4453" />
<rect x="770.5" y="549.5" width="11.2" height="15" fill="none" stroke="#eeeeee" stroke-width="1.1"/>
<rect x="770.5" y="549.5" width="11.2" height="2.4" fill="#eeeeee" />
<rect x="772.6" y="554.0" width="1.8" height="1.8" fill="#eeeeee" />
<rect x="775.6" y="554.4000000000001" width="4.6" height="1" fill="#eeeeee" />
<rect x="772.6" y="558.0" width="1.8" height="1.8" fill="#eeeeee" />
<rect x="775.6" y="558.4000000000001" width="4.6" height="1" fill="#eeeeee" />
<rect x="772.6" y="561.8" width="1.8" height="1.8" fill="#eeeeee" />
<rect x="775.6" y="562.2" width="4.6" height="1" fill="#eeeeee" />
<rect x="791" y="545" width="40" height="24" fill="#3b4453" />
<path d="M795.6 549.6h13v2.2h-13zM795.6 551.8v9.8h6.4M808.6 551.8v3" fill="none" stroke="#eeeeee" stroke-width="1.1" />
<rect x="802.3" y="559.2" width="8.8" height="5.8" fill="#eeeeee" />
<path d="M808.4 559v-1.6a2 2 0 0 1 4 0" fill="none" stroke="#eeeeee" stroke-width="1.1" />
<rect x="805.8" y="561" width="1.6" height="1.8" fill="#3b4453" />
<path d="M819.0 555.2h8.2l-4.1 4z" fill="#d6d6d6"/>
<rect x="832" y="545" width="24.200000000000045" height="24" fill="#3b4453" />
<rect x="836.6" y="550.2" width="5.8" height="5.2" fill="none" stroke="#eeeeee" stroke-width="1.1"/>
<circle cx="849" cy="555.6" r="3" fill="none" stroke="#eeeeee" stroke-width="1.1" />
<path d="M842.6 559.6l3.2 5h-6.4z" fill="none" stroke="#eeeeee" stroke-width="1.1" />
<rect x="859.5" y="545.3" width="23.2" height="23.4" fill="#4d709d" stroke="#5a7eac" stroke-width="0.8"/>
<circle cx="870.9" cy="557" r="7.8" fill="#5d7ba3" stroke="#a9b6c9" stroke-width="1.1" />
<path d="M867.8 560.2l6.6 -7" fill="none" stroke="#a9b6c9" stroke-width="1.6" />
<rect x="886" y="545" width="48" height="24" fill="#3b4453" />
<rect x="890.5" y="551.7" width="15" height="10.8" fill="none" stroke="#eeeeee" stroke-width="1.1"/>
<path d="M901.5 554l-2.8 2.8M902 553.5v3.2M902 553.5h-3.2M894.5 560l2.8 -2.8M894 560.5v-3.2M894 560.5h3.2" fill="none" stroke="#eeeeee" stroke-width="1.1" />
<rect x="914" y="550" width="16.2" height="2.1" fill="#eeeeee" />
<rect x="914" y="556" width="16.2" height="2.1" fill="#eeeeee" />
<rect x="914" y="561.9" width="16.2" height="2.1" fill="#eeeeee" />
<rect x="0" y="0" width="940" height="1.15" fill="#0a9be0" />
<rect x="0" y="0" width="1.15" height="575" fill="#0a9be0" />
<rect x="938.75" y="0" width="1.25" height="575" fill="#0a9be0" />
<rect x="0" y="573.7" width="940" height="1.3" fill="#0a9be0" />
</svg>
<div id="t1" class="t " style="left:9.20px;top:2.00px;font-size:22px;color:#c6252c;transform:scaleX(0.9479);font-weight:bold;">A</div>
<div id="t2" class="t " style="left:190.90px;top:7.70px;font-size:13px;color:#7cc0f2;transform:scaleX(0.9885);">共享</div>
<div id="t3" class="t " style="left:261.80px;top:7.20px;font-size:14.5px;color:#e8e8e8;transform:scaleX(0.9350);">Drawing1.d...</div>
<div id="t4" class="t " style="left:374.00px;top:7.90px;font-size:11px;color:#c4c8d0;transform:scaleX(1.0124);font-style:italic;">键入关键字或短语</div>
<div id="t5" class="t " style="left:599.00px;top:8.40px;font-size:12.8px;color:#f2f2f2;transform:scaleX(1.0833);">登录</div>
<div id="t6" class="t " style="left:775.80px;top:6.60px;font-size:14px;color:#3c424c;">?</div>
<div id="t7" class="t " style="left:17.90px;top:31.80px;font-size:13px;color:#dedede;">文件<span class="l">(F)</span></div>
<div id="t8" class="t " style="left:84.00px;top:31.80px;font-size:13px;color:#dedede;transform:scaleX(0.9762);">编辑<span class="l">(E)</span></div>
<div id="t9" class="t " style="left:150.00px;top:31.80px;font-size:13px;color:#dedede;transform:scaleX(1.0238);">视图<span class="l">(V)</span></div>
<div id="t10" class="t " style="left:217.90px;top:31.80px;font-size:13px;color:#dedede;transform:scaleX(1.0352);">插入<span class="l">(I)</span></div>
<div id="t11" class="t " style="left:281.00px;top:31.80px;font-size:13px;color:#dedede;transform:scaleX(1.0252);">格式<span class="l">(O)</span></div>
<div id="t12" class="t " style="left:351.30px;top:30.80px;font-size:13px;color:#dedede;transform:scaleX(0.9854);">工具<span class="l">(T)</span></div>
<div id="t13" class="t " style="left:416.90px;top:31.80px;font-size:13px;color:#dedede;transform:scaleX(1.0258);">绘图<span class="l">(D)</span></div>
<div id="t14" class="t " style="left:486.10px;top:31.80px;font-size:13px;color:#dedede;transform:scaleX(1.0605);">标注<span class="l">(N)</span></div>
<div id="t15" class="t " style="left:556.20px;top:31.80px;font-size:13px;color:#dedede;transform:scaleX(1.0468);">修改<span class="l">(M)</span></div>
<div id="t16" class="t " style="left:628.20px;top:31.80px;font-size:13px;color:#dedede;transform:scaleX(1.0077);">参数<span class="l">(P)</span></div>
<div id="t17" class="t " style="left:694.20px;top:31.80px;font-size:13px;color:#dedede;transform:scaleX(1.0468);">窗口<span class="l">(W)</span></div>
<div id="t18" class="t " style="left:767.60px;top:31.80px;font-size:13px;color:#dedede;">帮助<span class="l">(H)</span></div>
<div id="t19" class="t " style="left:17.60px;top:52.10px;font-size:14px;color:#dedede;transform:scaleX(0.9242);">Express</div>
<div id="t20" class="t " style="left:16.60px;top:77.00px;font-size:13.4px;color:#f0f0f0;transform:scaleX(1.0156);">默认</div>
<div id="t21" class="t " style="left:62.80px;top:77.00px;font-size:13.4px;color:#d8d8d8;">插入</div>
<div id="t22" class="t " style="left:108.00px;top:77.00px;font-size:13.4px;color:#d8d8d8;transform:scaleX(1.0350);">注释</div>
<div id="t23" class="t " style="left:155.20px;top:77.00px;font-size:13.4px;color:#d8d8d8;transform:scaleX(0.9853);">参数化</div>
<div id="t24" class="t " style="left:213.00px;top:77.00px;font-size:13.4px;color:#d8d8d8;transform:scaleX(1.0400);">视图</div>
<div id="t25" class="t " style="left:259.00px;top:77.00px;font-size:13.4px;color:#d8d8d8;">管理</div>
<div id="t26" class="t " style="left:306.00px;top:77.00px;font-size:13.4px;color:#d8d8d8;">输出</div>
<div id="t27" class="t " style="left:351.00px;top:77.00px;font-size:13.4px;color:#d8d8d8;">附加模块</div>
<div id="t28" class="t " style="left:424.00px;top:77.00px;font-size:13.4px;color:#d8d8d8;transform:scaleX(0.9630);">协作</div>
<div id="t29" class="t " style="left:470.00px;top:77.00px;font-size:13.4px;color:#d8d8d8;transform:scaleX(0.9811);">精选应用</div>
<div id="t30" class="t " style="left:540.50px;top:77.70px;font-size:14px;color:#d8d8d8;transform:scaleX(0.9477);">Express Tools</div>
<div id="t31" class="t " style="left:14.00px;top:140.20px;font-size:13px;color:#ececec;transform:scaleX(1.0162);">直线</div>
<div id="t32" class="t " style="left:48.30px;top:140.20px;font-size:13px;color:#ececec;transform:scaleX(1.0342);">多段线</div>
<div id="t33" class="t " style="left:102.70px;top:139.20px;font-size:13px;color:#ececec;transform:scaleX(1.0111);">圆</div>
<div id="t34" class="t " style="left:139.60px;top:140.20px;font-size:13px;color:#ececec;transform:scaleX(1.0364);">圆弧</div>
<div id="t35" class="t " style="left:93.00px;top:177.80px;font-size:13px;color:#ececec;transform:scaleX(1.0084);">绘图</div>
<div id="t36" class="t " style="left:267.00px;top:177.80px;font-size:13px;color:#ececec;">修改</div>
<div id="t37" class="t " style="left:366.70px;top:95.10px;font-size:39px;color:#dadada;transform:scaleX(1.0196);-webkit-text-stroke:0.5px #dadada;">A</div>
<div id="t38" class="t " style="left:366.80px;top:140.40px;font-size:13px;color:#ececec;transform:scaleX(1.0484);">文字</div>
<div id="t39" class="t " style="left:410.00px;top:140.40px;font-size:13px;color:#ececec;">标注</div>
<div id="t40" class="t " style="left:395.70px;top:177.80px;font-size:13px;color:#ececec;transform:scaleX(1.0520);">注释</div>
<div id="t41" class="t " style="left:498.30px;top:136.70px;font-size:13px;color:#f0f0f0;transform:scaleX(1.0520);">图层</div>
<div id="t42" class="t " style="left:566.00px;top:137.70px;font-size:13px;color:#f0f0f0;transform:scaleX(1.0399);">块</div>
<div id="t43" class="t " style="left:621.00px;top:137.70px;font-size:13px;color:#f0f0f0;">特性</div>
<div id="t44" class="t " style="left:688.30px;top:137.70px;font-size:13px;color:#f0f0f0;transform:scaleX(1.0161);">组</div>
<div id="t45" class="t " style="left:728.90px;top:137.70px;font-size:13px;color:#f0f0f0;transform:scaleX(1.0277);">实用工具</div>
<div id="t46" class="t " style="left:797.00px;top:137.70px;font-size:13px;color:#f0f0f0;transform:scaleX(1.0263);">剪贴板</div>
<div id="t47" class="t " style="left:865.00px;top:137.70px;font-size:13px;color:#f0f0f0;transform:scaleX(1.0204);">视图</div>
<div id="t48" class="t " style="left:6.60px;top:204.00px;font-size:11.5px;color:#d8d8d8;transform:scaleX(1.1577);"><span class="vb">[−][</span>俯视<span class="vb">][</span>二维线框<span class="vb">]</span></div>
<div id="t49" class="t " style="left:901.50px;top:221.00px;font-size:9px;color:#4a4f58;transform:scaleX(0.8240);">上</div>
<div id="t50" class="t " style="left:901.50px;top:203.00px;font-size:6.5px;color:#bdbdbd;transform:scaleX(1.0208);">北</div>
<div id="t51" class="t " style="left:901.50px;top:243.50px;font-size:6.5px;color:#bdbdbd;transform:scaleX(1.1667);">南</div>
<div id="t52" class="t " style="left:881.50px;top:221.50px;font-size:6.5px;color:#bdbdbd;transform:scaleX(1.1667);">西</div>
<div id="t53" class="t " style="left:921.00px;top:221.50px;font-size:6.5px;color:#bdbdbd;transform:scaleX(1.3611);">东</div>
<div id="t54" class="t " style="left:883.50px;top:259.50px;font-size:11px;color:#555a66;transform:scaleX(0.9043);">WCS</div>
<div id="t55" class="t c" style="left:38.10px;top:461.40px;font-size:12.4px;color:#1c1c1c;"><span class="a">[</span>剪切边<span class="a">(T)/</span>窗交<span class="a">(C)/</span>模式<span class="a">(O)/</span>投影<span class="a">(P)/</span>删除<span class="a">(R)/</span>放弃<span class="a">(U)]:</span></div>
<div id="t56" class="t c" style="left:31.80px;top:477.00px;font-size:12.4px;color:#1c1c1c;">选择要修剪的对象，或按住<span class="a">&nbsp;Shift&nbsp;</span>键选择要延伸的对象或</div>
<div id="t57" class="t c" style="left:66.00px;top:496.50px;font-size:12.4px;color:#000;transform:scaleX(0.9536);"><span class="a" style="font-weight:bold">TRIM</span></div>
<div id="t58" class="t c" style="left:104.90px;top:496.80px;font-size:12.4px;color:#1c1c1c;"><span class="a">[</span></div>
<div id="t59" class="t c" style="left:113.50px;top:496.00px;font-size:12.4px;color:#1c1c1c;">剪切边<span class="a">(<span style="color:#1c1cd0">T</span>)</span></div>
<div id="t60" class="t c" style="left:179.80px;top:496.00px;font-size:12.4px;color:#1c1c1c;">窗交<span class="a">(<span style="color:#1c1cd0">C</span>)</span></div>
<div id="t61" class="t c" style="left:232.10px;top:496.00px;font-size:12.4px;color:#1c1c1c;">模式<span class="a">(<span style="color:#1c1cd0">O</span>)</span></div>
<div id="t62" class="t c" style="left:285.70px;top:496.00px;font-size:12.4px;color:#1c1c1c;">投影<span class="a">(<span style="color:#1c1cd0">P</span>)</span></div>
<div id="t63" class="t c" style="left:338.80px;top:496.00px;font-size:12.4px;color:#1c1c1c;">删除<span class="a">(<span style="color:#1c1cd0">R</span>)</span></div>
<div id="t64" class="t c" style="left:390.20px;top:496.00px;font-size:12.4px;color:#1c1c1c;">放弃<span class="a">(<span style="color:#1c1cd0">U</span>)</span></div>
<div id="t65" class="t c" style="left:439.60px;top:496.80px;font-size:12.4px;color:#1c1c1c;transform:scaleX(0.9366);"><span class="a">]:</span></div>
<div id="t66" class="t " style="left:26.80px;top:519.20px;font-size:13px;color:#ffffff;transform:scaleX(1.0350);font-weight:bold;">模型</div>
<div id="t67" class="t " style="left:76.00px;top:519.80px;font-size:13px;color:#b4bcc8;transform:scaleX(0.9851);">布局1</div>
<div id="t68" class="t " style="left:132.80px;top:519.80px;font-size:13px;color:#b4bcc8;transform:scaleX(1.0366);">布局2</div>
<div id="t69" class="t " style="left:643.70px;top:521.00px;font-size:13.8px;color:#f4f4f4;transform:scaleX(0.8489);-webkit-text-stroke:0.25px #f4f4f4;">3045.9706, 1114.3152, 0.0000</div>
<div id="t70" class="t " style="left:813.00px;top:522.30px;font-size:12.5px;color:#f0f0f0;transform:scaleX(0.9404);">模型</div>
<div id="t71" class="t " style="left:526.20px;top:550.00px;font-size:13.8px;color:#f4f4f4;transform:scaleX(0.7913);-webkit-text-stroke:0.25px #f4f4f4;">1:1 / 100%</div>
<div id="t72" class="t " style="left:695.60px;top:549.30px;font-size:13px;color:#f0f0f0;transform:scaleX(0.9285);">小数</div>
</body></html>
